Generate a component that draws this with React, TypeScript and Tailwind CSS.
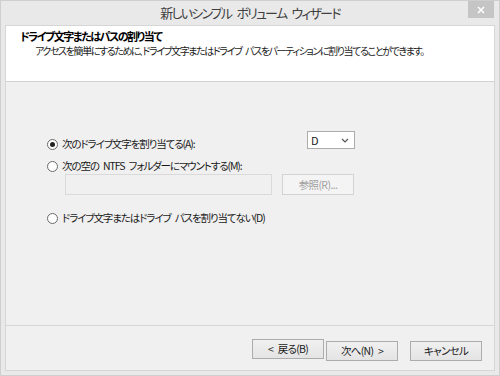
const jp = "font-['Meiryo_UI','Noto_Sans_CJK_JP',sans-serif] [font-feature-settings:'palt']";

type RadioProps = { checked?: boolean; label: string };

const Radio = ({ checked, label }: RadioProps) => (
  <div className="flex items-center gap-[4px]">
    <span className="flex items-center justify-center w-[11px] h-[11px] rounded-full border border-[#6a6a6a] bg-white">
      {checked && <span className="w-[5px] h-[5px] rounded-full bg-[#222]" />}
    </span>
    <span className="text-[10.5px] leading-[14px] tracking-[-1.1px] [word-spacing:3px] text-[#1a1a1a]">{label}</span>
  </div>
);

const WizButton = ({ label }: { label: string }) => (
  <button className="w-[72px] h-[20px] border border-[#acacac] bg-gradient-to-b from-[#f0f0f0] to-[#e4e4e4] text-[10.5px] leading-[18px] tracking-[-0.7px] [word-spacing:3px] text-[#1a1a1a]">
    {label}
  </button>
);

export default function App() {
  return (
    <div className={`w-[500px] h-[376px] bg-[#e9e9e9] border border-[#cfcfcf] flex flex-col ${jp}`}>
      <div className="relative h-[24px] flex items-center justify-center">
        <span className="text-[13px] text-[#404040] tracking-[-1.8px] [word-spacing:4px]">新しいシンプル ボリューム ウィザード</span>
        <div className="absolute right-[5px] top-0 w-[26px] h-[17px] bg-[#c5c5c5] flex items-center justify-center">
          <svg width="8" height="8" viewBox="0 0 8 8">
            <path d="M1 1L7 7M7 1L1 7" stroke="#fff" strokeWidth="1.6" />
          </svg>
        </div>
      </div>

      <div className="flex-1 mx-[4px] mb-[4px] border border-[#d6d6d6] bg-[#f0f0f0] flex flex-col">
        <div className="h-[56px] bg-white border-b border-[#d2d2d2] pt-[4px]">
          <div className="pl-[14px] text-[11px] leading-[13px] tracking-[-1.5px] font-bold text-[#000]">ドライブ文字またはパスの割り当て</div>
          <div className="mt-[1px] pl-[29px] text-[10px] leading-[13px] tracking-[-1.4px] [word-spacing:3px] text-[#1a1a1a] whitespace-nowrap">
            アクセスを簡単にするために、ドライブ文字またはドライブ パスをパーティションに割り当てることができます。
          </div>
        </div>

        <div className="flex-1 pt-[49px] pl-[41px]">
          <div className="flex items-start w-[308px] justify-between">
            <div className="mt-[6px]">
              <Radio checked label="次のドライブ文字を割り当てる(A):" />
            </div>
            <div className="w-[48px] h-[18px] border border-[#acacac] bg-white flex items-center justify-between pl-[3px] pr-[5px]">
              <span className="text-[11px] leading-[14px] text-[#1a1a1a]">D</span>
              <svg width="8" height="5" viewBox="0 0 8 5">
                <path d="M1 1L4 4L7 1" stroke="#555" strokeWidth="1.2" fill="none" />
              </svg>
            </div>
          </div>
          <div className="mt-[8px]">
            <Radio label="次の空の NTFS フォルダーにマウントする(M):" />
          </div>
          <div className="mt-[1px] flex items-center gap-[10px] pl-[18px]">
            <div className="w-[207px] h-[21px] border border-[#dadada] bg-[#f0f0f0]" />
            <div className="w-[72px] h-[21px] border border-[#d3d3d3] bg-[#f4f4f4] flex items-center justify-center text-[10.5px] tracking-[-0.6px] text-[#9f9f9f]">
              参照(R)...
            </div>
          </div>
          <div className="mt-[16px]">
            <Radio label="ドライブ文字またはドライブ パスを割り当てない(D)" />
          </div>
        </div>

        <div className="h-[45px] border-t border-[#d6d6d6] flex items-center pl-[246px] pt-[1px]">
          <WizButton label="< 戻る(B)" />
          <div className="ml-[2px]">
            <WizButton label="次へ(N) >" />
          </div>
          <div className="ml-[12px]">
            <WizButton label="キャンセル" />
          </div>
        </div>
      </div>
    </div>
  );
}
